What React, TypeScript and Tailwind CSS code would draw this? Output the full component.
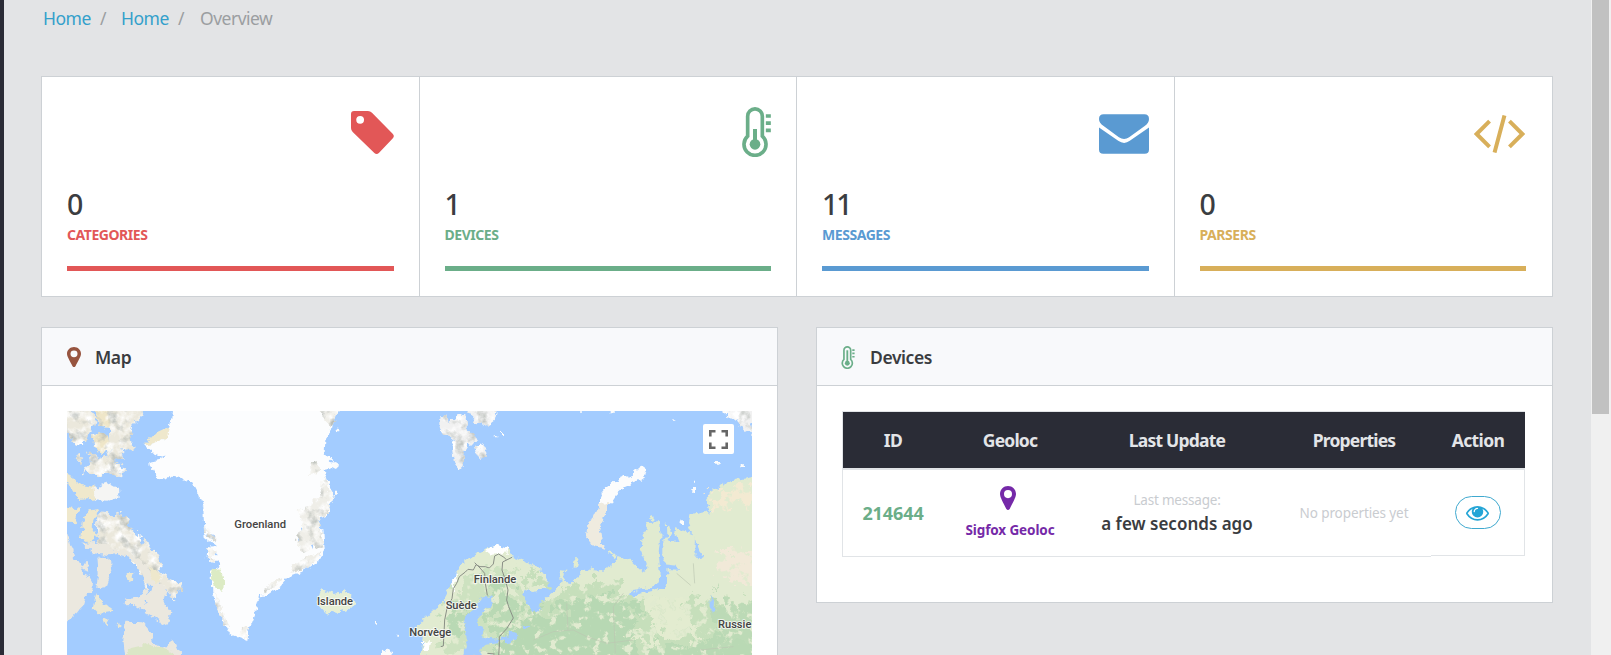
import React from "react";

const FONT = "font-['Noto_Sans','Open_Sans',sans-serif]";

function TagIcon() {
  return (
    <svg className="w-[43px] h-[43px]" viewBox="0 0 127 127" fill="currentColor">
      <path
        fillRule="evenodd"
        d="M9 0H50Q57 0 62 5L123 67Q130 74 123 81L83 123Q76 130 69 124L5 62Q0 57 0 50V9Q0 0 9 0ZM27 14.500a11.500 11.500 0 1 0 0 23a11.500 11.500 0 1 0 0-23Z"
      />
    </svg>
  );
}

function ThermoIcon({ className, stemTop, stroke }: { className: string; stemTop: number; stroke: number }) {
  return (
    <svg className={className} viewBox="0 0 86 150" fill="none" stroke="currentColor">
      <path strokeWidth={stroke} d="M16.500 27.500a22 22 0 0 1 44 0V87.400A33 33 0 1 1 16.500 87.400Z" />
      <circle cx="38.500" cy="112" r="16" fill="currentColor" stroke="none" />
      <path strokeWidth="12" d={`M38.500 ${stemTop}V112`} />
      <path strokeWidth="11" d="M71 27H86M71 48.500H86M71 70H86" />
    </svg>
  );
}

function MailIcon() {
  return (
    <svg className="w-[50px] h-[40px]" viewBox="0 0 151 119" fill="currentColor">
      <path d="M14 0H137Q151 0 151 14Q151 26 138 35L91 69Q76 80 60 69L14 35Q0 26 0 14Q0 0 14 0Z" />
      <path d="M0 40L58 80Q76 93 93 80L151 40V106Q151 119 138 119H13Q0 119 0 106Z" />
    </svg>
  );
}

function CodeIcon() {
  return (
    <svg className="mr-px w-[51px] h-[38px]" viewBox="0 0 154 114" fill="none" stroke="currentColor" strokeWidth="12">
      <path d="M47 18L8 57L47 96M107 18L146 57L107 96M92 1L62 113" />
    </svg>
  );
}

function PinIcon({ className }: { className: string }) {
  return (
    <svg className={className} viewBox="0 0 48 71" fill="currentColor" preserveAspectRatio="none">
      <path
        fillRule="evenodd"
        d="M24 0C37 0 48 10 48 24C48 34 38 50 29 68Q24 74 19 68C10 50 0 34 0 24C0 10 11 0 24 0ZM24 12a12 12 0 1 0 0 24a12 12 0 1 0 0-24Z"
      />
    </svg>
  );
}

function EyeIcon() {
  return (
    <svg className="w-[23px] h-[23px]" viewBox="0 0 1792 1792" fill="currentColor">
      <path d="M1664 960q-152-236-381-353 61 104 61 225 0 185-131.500 316.500t-316.500 131.500-316.500-131.500-131.500-316.500q0-121 61-225-229 117-381 353 133 205 333.500 326.500t434.500 121.500 434.500-121.500 333.500-326.500zm-720-384q0-20-14-34t-34-14q-125 0-214.500 89.500t-89.500 214.500q0 20 14 34t34 14 34-14 14-34q0-86 61-147t147-61q20 0 34-14t14-34zm848 384q0 34-20 69-140 230-376.500 368.500t-499.500 138.500-499.500-139-376.500-368q-20-35-20-69t20-69q140-229 376.500-368t499.500-139 499.500 139 376.500 368q20 35 20 69z" />
    </svg>
  );
}

function Label({ x, y, w, children }: { x: number; y: number; w: number; children: string }) {
  return (
    <text
      x={x}
      y={y}
      textLength={w}
      lengthAdjust="spacingAndGlyphs"
      fontSize="34"
      fontWeight="500"
      fill="#444444"
      stroke="#ffffff"
      strokeOpacity="0.7"
      strokeWidth="6"
      strokeLinejoin="round"
      paintOrder="stroke"
      className="font-[Roboto,sans-serif]"
    >
      {children}
    </text>
  );
}

function WorldMap() {
  return (
    <svg className="block w-[685px] h-[244px] bg-[#a3ccff]" viewBox="0 0 685 244">
      <defs>
        <filter id="coast" x="-5%" y="-5%" width="110%" height="110%" colorInterpolationFilters="sRGB">
          <feTurbulence type="fractalNoise" baseFrequency="0.05" numOctaves="3" seed="4" result="n" />
          <feDisplacementMap in="SourceGraphic" in2="n" scale="24" xChannelSelector="R" yChannelSelector="G" />
        </filter>
        <filter id="terrain" x="-5%" y="-5%" width="110%" height="110%" colorInterpolationFilters="sRGB">
          <feTurbulence type="fractalNoise" baseFrequency="0.05" numOctaves="3" seed="9" result="n" />
          <feDisplacementMap in="SourceGraphic" in2="n" scale="30" xChannelSelector="R" yChannelSelector="G" result="d" />
          <feTurbulence type="fractalNoise" baseFrequency="0.03" numOctaves="4" seed="2" result="t" />
          <feColorMatrix in="t" type="matrix" values="0 0 0 0 1  0 0 0 0 1  0 0 0 0 1  3 0 0 0 -1.2" result="w" />
          <feComposite in="w" in2="d" operator="in" result="wl" />
          <feColorMatrix in="t" type="matrix" values="0 0 0 0 0.7  0 0 0 0 0.72  0 0 0 0 0.7  0 2.500 0 0 -1.25" result="g" />
          <feComposite in="g" in2="d" operator="in" result="gl" />
          <feMerge>
            <feMergeNode in="d" />
            <feMergeNode in="wl" />
            <feMergeNode in="gl" />
          </feMerge>
        </filter>
        <filter id="blotch" x="-5%" y="-5%" width="110%" height="110%" colorInterpolationFilters="sRGB">
          <feTurbulence type="fractalNoise" baseFrequency="0.03" numOctaves="5" seed="7" result="n" />
          <feDisplacementMap in="SourceGraphic" in2="n" scale="110" xChannelSelector="R" yChannelSelector="G" result="d" />
          <feTurbulence type="fractalNoise" baseFrequency="0.04" numOctaves="4" seed="12" result="t" />
          <feColorMatrix in="t" type="matrix" values="0 0 0 0 0  0 0 0 0 0  0 0 0 0 0  8 0 0 0 -4.5" result="m" />
          <feComposite in="d" in2="m" operator="out" />
        </filter>
      </defs>

      <g transform="translate(-37 -91) scale(0.33333)">
        <g filter="url(#terrain)" fill="#ebe8dc">
          <path d="M90 250H180L196 300L182 330L160 378L130 372L112 340H90Z" />
          <path d="M236 250H362L332 290L306 318L300 360L316 385L278 392L282 415L240 420L232 380L238 330Z" />
          <path fill="#efe6c8" d="M190 255H240V320L206 318Z" />
          <path fill="#efe6c8" d="M190 345L232 340L236 390L212 405L188 375Z" />
          <path d="M176 398L196 400L206 418L236 410L262 425L286 450L262 470L232 458L210 466L160 460L180 432Z" />
          <path d="M146 402l12 10l-8 14l-10-8Z" />
          <path d="M205 575L232 575L246 590L258 580L290 588L300 605L296 625L330 650L346 672L388 700L396 735L380 748L420 780L458 800L434 838L410 808L396 790L352 800L336 760L304 715L262 690L236 696L200 670L205 655L196 610Z" />
        </g>
        <g filter="url(#coast)" fill="#ebe8df">
          <path d="M160 668L205 665L260 686L304 700L340 730L370 770L412 800L400 845L424 880L412 918L350 880L312 855L284 856L286 838L330 832L352 800L336 760L304 715L262 702L236 706L190 700Z" />
          <path d="M202 710L238 712L244 750L226 802L198 806L206 760Z" />
          <path fill="#ebe8d4" d="M200 820L220 850L250 872L206 880L188 862Z" />
          <path d="M90 640L116 655L128 695L136 716L152 740L170 725L176 760L192 790L190 812L168 825L160 856L130 890L108 906L90 900Z" />
          <path fill="#ebe8d4" d="M292 756l20 2l4 20l-18 8l-12-14Z" />
          <path fill="#ebe8d4" d="M222 890l14 8l-8 14l-12-8ZM262 904l6 6v14l-8-8Z" />
          <path fill="#eee8cc" d="M356 740L384 752L392 780L372 790Z" />
          <path fill="#a3ccff" d="M346 796L366 798L356 820ZM340 840L354 848L344 852ZM150 745L176 752L178 770L160 762Z" />
        </g>
        <g filter="url(#coast)">
          <path fill="#efe8cc" d="M90 455L126 468L150 495L196 500L202 535L150 540L128 505L100 484Z" />
          <path fill="#f5f5f3" d="M190 505L238 490L264 504L266 532L232 545L196 540Z" />
          <path fill="#efe8cc" d="M90 558L150 566L134 610L90 606Z" />
          <path fill="#efe8cc" d="M176 574L206 570L190 600L188 630L204 650L180 668L154 654L158 610Z" />
          <path fill="#ebe8df" d="M286 908L340 910L362 936L372 970L396 986L414 980L430 956L454 1010H286L280 960Z" />
          <path fill="#dbe6c6" d="M300 985L356 972L410 990L440 1010H290Z" />
          <path fill="#efe8cc" d="M340 375L368 345L420 322L412 350L372 374Z" />
          <path
            fill="#fcfdfe"
            d="M428 240H935L912 300L902 335L886 356L884 400L912 432L906 448L884 452L892 480L908 520L896 560L892 588L850 600L880 630L884 690L868 716L838 740L812 756L774 770L752 796L716 822L690 826L682 852L672 886L656 926L652 960L600 942L576 900L560 850L544 820L542 760L560 745L574 735L560 722L530 718L532 684L560 680L524 650L522 612L520 560L506 520L490 490L448 474L418 468L388 478L360 440L358 426L388 420L408 412L372 402L342 376L372 372L410 350L424 300Z"
          />
          <path fill="#dcebc4" d="M548 750L568 745L582 775L580 815L556 812L546 780Z" />
          <path fill="#a3ccff" d="M806 640L818 622L824 640L812 668ZM846 650L850 690L842 672ZM528 640L556 650L552 662ZM536 690L560 700L552 706Z" />
        </g>
        <g filter="url(#terrain)" fill="#efeee8">
          <path d="M860 260L930 270L904 322L884 300Z" />
          <path d="M846 430L866 425L862 462L840 465Z" />
          <path d="M880 480L908 525L894 580L862 592L878 640L880 688L850 680L820 695L800 660L816 610L806 575L850 550L870 520Z" />
          <path d="M526 610L540 640L560 660L530 652ZM532 684L560 690L552 718L532 715Z" />
          <path d="M868 700L840 738L780 762L790 735L830 710ZM752 770L740 796L700 824L716 790Z" />
          <path d="M550 812L570 840L582 890L596 920L584 915L560 860Z" />
          <path d="M634 920L656 925L652 958L628 948Z" />
        </g>
        <g filter="url(#coast)" fill="#e6efd6">
          <path d="M872 806L890 822L908 812L924 822L944 808L968 834L972 858L940 872L910 882L882 872L862 850Z" />
          <path fill="#fbfbfb" d="M912 512h12v12h-12ZM918 326h10v8h-10ZM910 425l16 10l-6 12l-14-8ZM1036 906h8v8h-8ZM1096 944h6v6h-6ZM1056 994l26-6l4 22h-30Z" />
        </g>
      </g>

      <g transform="translate(333 -91) scale(0.33333)">
        <g filter="url(#terrain)" fill="#f1f1f1">
          <path d="M118 292L140 290L150 310L170 282L196 285L200 325L226 350L232 364L200 382L190 400L188 440L180 456L162 430L156 385L166 362L138 350L118 318Z" />
          <path d="M196 265H292L284 300L256 320L230 308L214 290Z" />
          <path d="M226 378L246 374L260 400L246 418L230 400Z" />
          <path d="M975 265H1060V345L1030 330L1005 296L980 294Z" />
        </g>
        <g filter="url(#coast)">
          <path fill="#fcfcfc" d="M724 438L740 450L736 468L712 486L676 500L652 522L636 546L620 560L598 558L606 520L634 486L672 470L700 460Z" />
          <path fill="#efebdf" d="M596 556L626 552L612 590L600 630L606 664L616 686L582 678L556 646L570 610L582 584Z" />
          <path fill="#fcfcfc" d="M540 270h12v8h-12ZM632 270h12v8h-12ZM816 296l14 6l-6 6ZM948 426l12 0l-2 8h-10ZM1022 430h10v10h-10ZM874 504h8v14h-8ZM882 482h6v6h-6ZM842 598h10v14h-10ZM286 346h6v6h-6ZM306 336h6v6h-6Z" />
          <path
            fill="#e1ebd0"
            d="M60 1010L64 990L68 956L40 935L62 905L96 876L128 846L152 800L166 756L190 724L216 706L250 690L292 676L326 684L336 708L372 722L416 742L442 776L438 806L400 816L370 806L376 850L400 876L428 872L436 834L470 808L482 780L478 750L496 752L490 780L508 792L540 762L576 742L590 758L636 738L656 708L690 720L722 748L738 754L740 730L722 690L724 660L742 610L776 606L782 640L776 700L782 760L770 796L740 804L700 812L690 828L760 812L800 796L802 750L790 720L786 660L802 640L800 604L812 640L806 660L836 668L826 640L830 624L876 640L890 670L888 700L910 716L896 680L876 640L864 612L868 586L900 580L930 574L918 540L936 512L984 486L1030 476L1070 470V1010Z"
          />
          <circle cx="526" cy="730" r="10" fill="#e3ecd0" />
          <circle cx="756" cy="594" r="8" fill="#e3ecd0" />
          <path fill="#e3ecd0" d="M630 694L650 708L644 714L626 698Z" />
        </g>
        <g filter="url(#blotch)">
          <path fill="#c6dfbb" d="M370 740L416 760L428 796L390 800ZM436 850L500 800L560 780L640 790L700 830L900 840L1100 850V1060H300L310 960Z" />
          <path fill="#cde2c0" d="M150 830L216 750L330 740L340 800L380 830L390 870L340 930L310 1000L130 1000Z" />
        </g>
        <g filter="url(#blotch)">
          <path fill="#b7d8b3" d="M450 880L540 830L620 830L700 860L730 890L700 930L690 980L760 1050H300L304 970L350 920L380 880Z" />
          <path fill="#b9d9b4" d="M260 790L320 780L332 850L380 860L340 900L310 960L270 930L280 850ZM150 860L210 870L190 950L140 960Z" />
          <path fill="#bcdab6" d="M930 800L960 850L1100 860V980L980 960L940 900Z" />
          <path fill="#b9d9b4" d="M760 975L860 985L940 950L1100 975V1060H720Z" />
        </g>
        <g filter="url(#blotch)">
          <path fill="#f3ead2" d="M930 530L1000 500L1100 480V560L1000 550L950 570Z" />
          <path fill="#f1e9d8" d="M950 690L1100 690V770L990 790L950 740Z" />
          <path fill="#e3ecd0" d="M740 830L850 830L880 900L900 960L800 950L740 900ZM690 940L780 950L760 990Z" />
        </g>
        <g filter="url(#coast)" fill="#a3ccff">
          <path d="M244 834L276 826L278 850L256 870L232 890L234 914L256 926L246 950L300 958L298 970L250 974L240 1010H190L204 970L190 910L204 880L230 862Z" />
          <path d="M372 812L400 816L434 810L428 838L412 872L392 868L374 840Z" />
          <path d="M326 930L350 936L352 946L326 952ZM370 914L388 920L380 934ZM300 950L350 948L330 968L300 962Z" />
          <path d="M780 660L790 660L790 730L830 734L834 752L802 750L800 790L780 806L716 816L712 806L764 800L786 770Z" />
          <path d="M888 660L900 700L912 712L904 720L886 700ZM932 830l10 10l-2 40l-8-4Z" />
        </g>
        <g filter="url(#coast)" fill="#ffffff">
          <path d="M258 690L292 674L326 684L320 698L276 704ZM154 790L166 756L172 780L156 822ZM66 966L90 960L86 990L68 990Z" />
        </g>
        <g fill="none" stroke="#8a8f86" strokeWidth="3" strokeLinejoin="round">
          <path d="M122 980L130 978L132 940L134 900L142 860L156 836L160 806L170 790L178 770L196 756L204 748L220 750L228 734L240 740L256 740L268 744L280 732L284 708L296 702L312 712L320 720L336 712" />
          <path d="M224 728L240 744L254 760L256 790L262 826M320 720L308 726L306 750L316 780L324 810L320 840L326 860L340 894L320 926L298 950L298 975L296 1010M262 1000L284 1002" />
          <path stroke="#bcc7b2" strokeWidth="2" d="M830 760L872 796M646 1000L640 860L670 820M400 960L460 935L520 930L560 950L620 970L700 960M880 730L884 790M900 990L1000 980M500 850L504 930" />
        </g>
      </g>

      <g transform="translate(-37 -91) scale(0.33333)">
        <Label x={613} y={625} w={155}>Groenland</Label>
        <Label x={861} y={856} w={108}>Islande</Label>
      </g>
      <g transform="translate(333 -91) scale(0.33333)">
        <Label x={221} y={790} w={128}>Finlande</Label>
        <Label x={137} y={868} w={93}>Suède</Label>
        <Label x={28} y={949} w={126}>Norvège</Label>
        <Label x={954} y={923} w={100}>Russie</Label>
      </g>
    </svg>
  );
}

const stats = [
  { value: "0", label: "CATEGORIES", text: "text-[#e25757]", bar: "bg-[#e25757]", icon: <TagIcon />, pad: "pt-[9px]" },
  {
    value: "1",
    label: "DEVICES",
    text: "text-[#6bae89]",
    bar: "bg-[#6bae89]",
    icon: <ThermoIcon className="w-[29px] h-[50px]" stemTop={66} stroke={11} />,
    pad: "pt-[5px]",
  },
  { value: "11", label: "MESSAGES", text: "text-[#5a9ad2]", bar: "bg-[#5a9ad2]", icon: <MailIcon />, pad: "pt-[12px]" },
  { value: "0", label: "PARSERS", text: "text-[#d8af5a]", bar: "bg-[#d8af5a]", icon: <CodeIcon />, pad: "pt-[13px]" },
];

function Panel({ icon, title, className, children }: { icon: React.ReactNode; title: string; className: string; children: React.ReactNode }) {
  return (
    <section className={`w-[737px] shrink-0 border border-[#cdd1d5] bg-white ${className}`}>
      <header className="flex h-[58px] items-center border-b border-[#cdd1d5] bg-[#f8f9fb] pl-[25px]">
        <span className="flex w-[28px] items-center">{icon}</span>
        <h2 className="text-[17.5px] leading-6 font-semibold tracking-[-0.4px] text-[#3a3c40]">{title}</h2>
      </header>
      <div className="p-[25px]">{children}</div>
    </section>
  );
}

export default function App() {
  return (
    <div className={`flex h-[655px] w-[1611px] overflow-hidden bg-[#e3e4e6] ${FONT}`}>
      <div className="w-1 shrink-0 bg-[#2a2b36]" />
      <main className="w-[1587px] shrink-0 pl-[37px]">
        <nav className="flex h-[76px] pt-[6px] pl-[2px] text-[17.5px] leading-6 text-[#9b9ea1]">
          <a className="w-[57px] tracking-[-0.5px] text-[#33a0cb]">Home</a>
          <span className="w-[21px]">/</span>
          <a className="w-[57px] tracking-[-0.5px] text-[#33a0cb]">Home</a>
          <span className="w-[22px]">/</span>
          <span className="tracking-[-0.5px]">Overview</span>
        </nav>

        <div className="grid h-[221px] w-[1512px] grid-cols-4 border border-[#cdd1d5] bg-white">
          {stats.map((s, i) => (
            <div key={s.label} className={`flex flex-col p-[25px] ${i < 3 ? "border-r border-[#cdd1d5]" : "pr-[26px]"}`}>
              <div className={`flex h-[84px] items-start justify-end ${s.pad} ${s.text}`}>{s.icon}</div>
              <div className="text-[28.5px] leading-[37px] font-medium tracking-[-2px] text-[#3b3d41]">{s.value}</div>
              <div className={`pt-px text-[14px] leading-[22px] font-bold tracking-[-0.45px] ${s.text}`}>{s.label}</div>
              <div className={`mt-auto h-[5px] ${s.bar}`} />
            </div>
          ))}
        </div>

        <div className="mt-[30px] flex items-start gap-[38px]">
          <Panel className="h-[400px]" title="Map" icon={<PinIcon className="h-[20px] w-[14px] text-[#97543f]" />}>
            <div className="relative">
              <WorldMap />
              <button className="absolute top-[13px] right-[18px] flex h-[30px] w-[31px] items-center justify-center rounded-[2px] bg-white">
                <svg className="h-[19px] w-[19px]" viewBox="0 0 19 19" fill="none" stroke="#666666" strokeWidth="2.600">
                  <path d="M1.300 6.500V1.300H6.500M12.500 1.300H17.700V6.500M17.700 12.500V17.700H12.500M6.500 17.700H1.300V12.500" />
                </svg>
              </button>
            </div>
          </Panel>

          <Panel
            className="h-[276px]"
            title="Devices"
            icon={<ThermoIcon className="mt-px -ml-px h-[23px] w-[14px] text-[#6bae89]" stemTop={28} stroke={11} />}
          >
            <div className="w-[683px]">
              <div className="grid h-[57px] grid-cols-[100px_134px_200px_154px_94px] items-center border-t border-l border-[#e1e4e7] bg-[#2a2c36] text-center text-[17.5px] font-bold text-[#e3e5e8]">
                <span className="tracking-[-0.5px]">ID</span>
                <span className="tracking-[-0.8px]">Geoloc</span>
                <span className="tracking-[-0.8px]">Last Update</span>
                <span className="tracking-[-0.8px]">Properties</span>
                <span className="tracking-[-0.6px]">Action</span>
              </div>
              <div className="flex h-[89px] items-start">
                <div className="grid h-[89px] w-[589px] grid-cols-[100px_134px_200px_154px] items-center border-t-2 border-b border-l border-[#e1e4e7] text-center">
                  <span className="text-[18px] font-bold tracking-[-0.1px] text-[#6bae89]">214644</span>
                  <div className="flex flex-col items-center text-[#7529a8]">
                    <PinIcon className="mr-[4px] h-[24px] w-[16px]" />
                    <span className="mt-[10px] text-[13.500px] leading-5 font-bold tracking-[-0.1px]">Sigfox Geoloc</span>
                  </div>
                  <div className="flex flex-col pb-px">
                    <span className="text-[13.500px] leading-[22px] tracking-[-0.2px] text-[#c9ccd0]">Last message:</span>
                    <span className="pt-px text-[17px] leading-6 font-semibold text-[#3a3c40]">a few seconds ago</span>
                  </div>
                  <span className="text-[13.500px] tracking-[-0.1px] text-[#c9ccd0]">No properties yet</span>
                </div>
                <div className="flex h-[88px] w-[94px] items-center justify-center border-t-2 border-r border-b border-[#e1e4e7]">
                  <button className="mb-px flex h-[33px] w-[46px] items-center justify-center rounded-full border border-[#3fa9cf] text-[#24a5d6]">
                    <EyeIcon />
                  </button>
                </div>
              </div>
            </div>
          </Panel>
        </div>
      </main>
      <aside className="flex w-[20px] shrink-0 justify-center bg-[#f0f0f0] pr-px">
        <div className="h-[414px] w-[17px] bg-[#c1c1c1]" />
      </aside>
    </div>
  );
}
